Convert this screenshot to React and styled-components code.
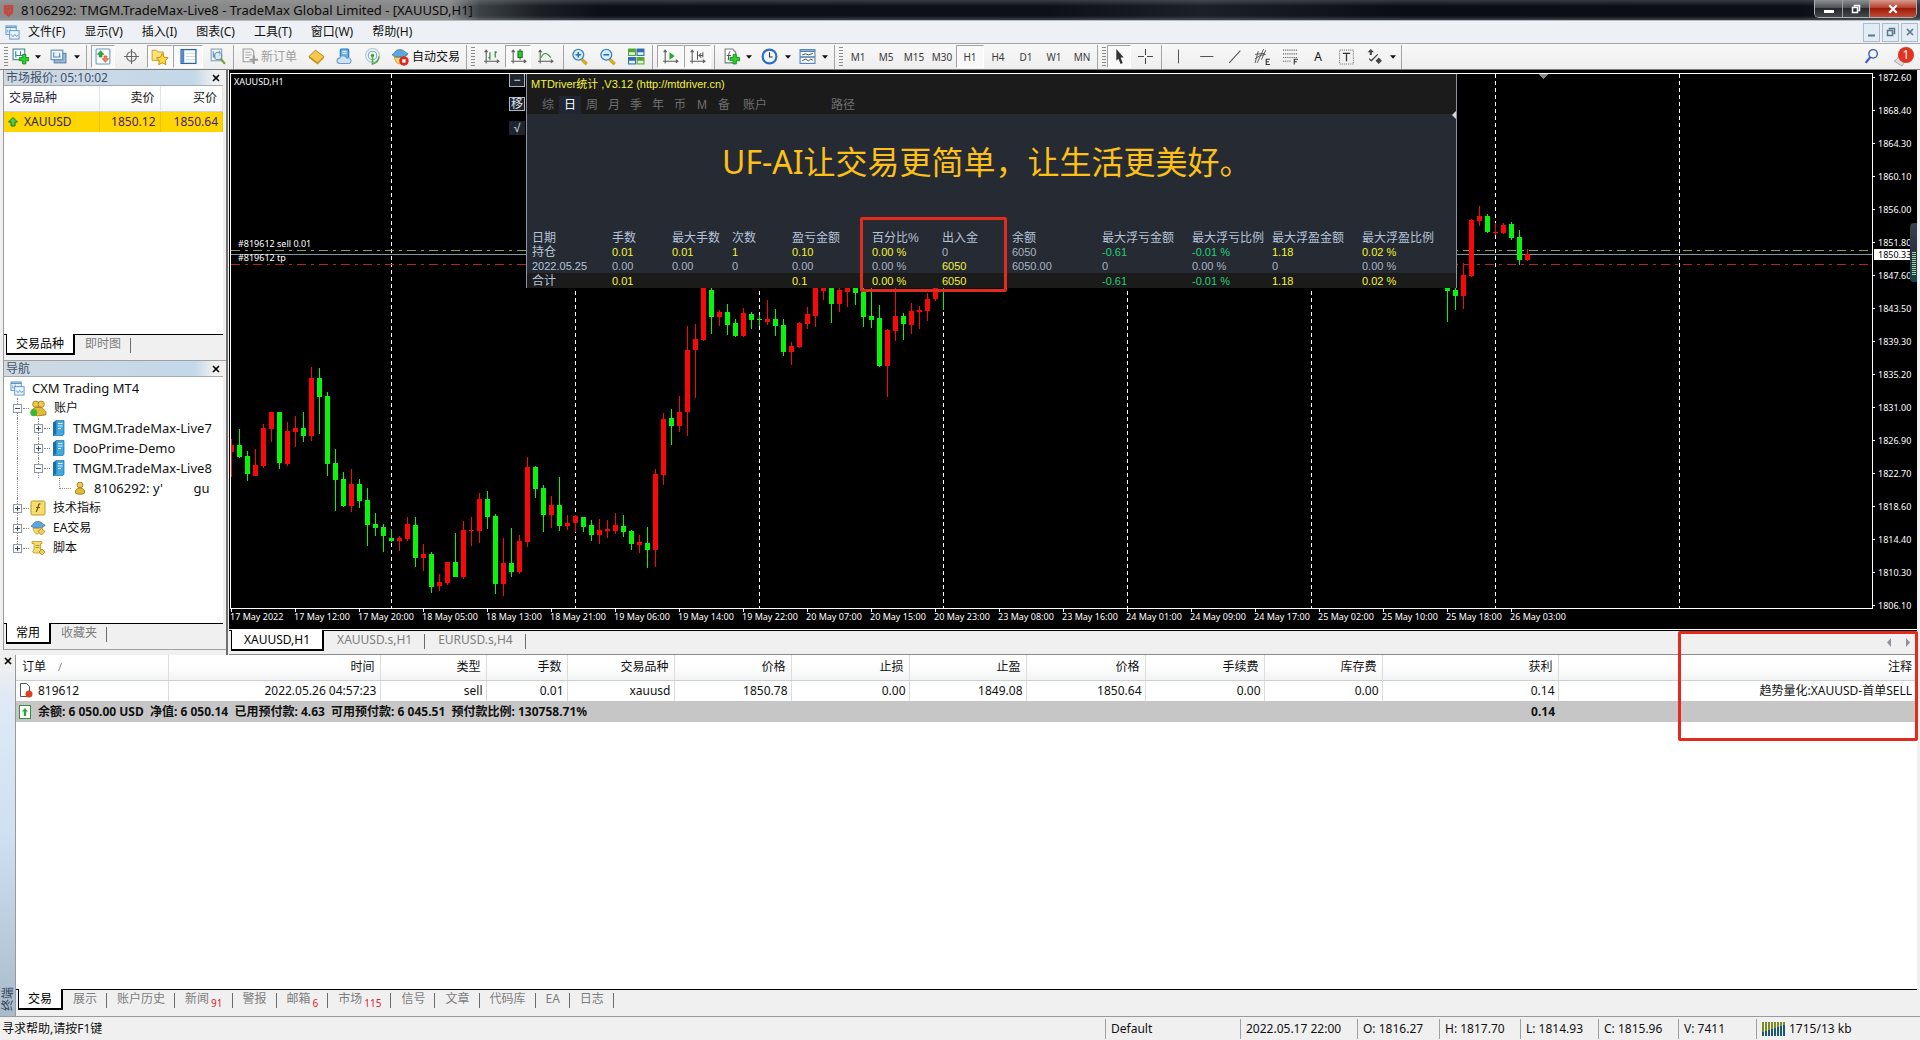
import React from "react";
import styled, { createGlobalStyle, css } from "styled-components";

const UI = `"Noto Sans", "Noto Sans CJK SC", sans-serif`;
const PANEL = `"Liberation Sans", "Noto Sans CJK SC", sans-serif`;

const GlobalStyle = createGlobalStyle`
  *, *::before, *::after { box-sizing: border-box; }
  body { margin: 0; background: #f0f0f0; font: 12px/20px ${UI}; color: #111; }
  button { font: inherit; color: inherit; margin: 0; padding: 0; border: 0; background: none; cursor: default; white-space: nowrap; }
  table { border-collapse: collapse; border-spacing: 0; }
  th { font-weight: 400; }
  svg { display: block; flex: none; }
`;

/* ---------- window frame ---------- */

const Window = styled.div`
  display: flex;
  flex-direction: column;
  min-height: 100vh;
`;

const TitleBar = styled.header`
  display: flex;
  align-items: center;
  height: 21px;
  padding-left: 1px;
  border-bottom: 1px solid #b4b9be;
  background:
    linear-gradient(180deg, rgba(160, 165, 170, 0.3), transparent 30%, transparent 80%, rgba(150, 160, 170, 0.35)),
    linear-gradient(90deg, #8c8c8c 0, #868686 450px, #3c4145 480px, #1b1f24 540px, #0c0f17 600px, #0d1018 1050px, #1c2028 1200px, #0a0d14 1400px, #0b0e14 1800px, #30353b 100%);
`;

const WindowTitle = styled.h1`
  margin: 0 0 0 5px;
  font-size: 13px;
  font-weight: 400;
  line-height: 20px;
  color: #0c0c0c;
`;

const WindowButtons = styled.div`
  display: flex;
  align-self: flex-start;
  margin-left: auto;
  margin-right: 3px;
  height: 18px;
  border: 1px solid #aab0b5;
  border-top: 0;
  border-radius: 0 0 5px 5px;
  overflow: hidden;
`;

const WindowButton = styled.button`
  display: grid;
  place-items: center;
  width: ${(p) => (p.$close ? 47 : 27)}px;
  background: ${(p) =>
    p.$close
      ? "linear-gradient(#d79b8f, #b8402c 45%, #9c1c0c 50%, #c44a30)"
      : "linear-gradient(#8d9094, #4d5055 45%, #24272b 50%, #45484c)"};
  & + & { border-left: 1px solid #9a9fa4; }
`;

const MenuBar = styled.nav`
  display: flex;
  align-items: center;
  height: 22px;
  padding: 0 2px 0 5px;
  background: #edf1f5;
`;

const Menus = styled.div`
  display: flex;
  gap: 19px;
  margin-left: 8px;
`;

const MdiButtons = styled.div`
  display: flex;
  gap: 2px;
  margin-left: auto;
`;

const MdiButton = styled.button`
  display: grid;
  place-items: center;
  width: 17px;
  height: 19px;
  border: 1px solid #a8bccd;
  background: #e2ecf5;
`;

/* ---------- toolbar ---------- */

const Toolbar = styled.div`
  display: flex;
  align-items: center;
  height: 27px;
  border-top: 1px solid #a6a6a6;
  border-bottom: 1px solid #7c7c7c;
  background: linear-gradient(#f8f8f8, #eeeeee);
`;

const Group = styled.div`
  display: flex;
  align-items: center;
  height: 24px;
  padding: 0 ${(p) => p.$end || 2}px 0 ${(p) => p.$start || 2}px;
  border-right: 1px solid #a3a3a3;
`;

const Grip = styled.span`
  width: 4px;
  height: 20px;
  margin-left: 4px;
  background: repeating-linear-gradient(#8c8c8c 0 1px, transparent 1px 3px);
`;

const Tool = styled.button`
  display: flex;
  align-items: center;
  justify-content: center;
  gap: 3px;
  height: 23px;
  width: ${(p) => (p.$wide ? "auto" : `${p.$w || 28}px`)};
  padding: 0 ${(p) => (p.$wide ? 4 : 0)}px;
  color: ${(p) => (p.$off ? "#9d9d9d" : "#111")};
  border: 1px solid transparent;
  ${(p) =>
    p.$on &&
    css`
      border-color: #a2a2a2 #fff #fff #a2a2a2;
      background: #f9f9f9;
      background-clip: padding-box;
    `}
`;

const Period = styled(Tool)`
  font-size: 10px;
  color: #3c3c3c;
`;

const Alerts = styled.div`
  display: flex;
  align-items: center;
  gap: 10px;
  margin-left: auto;
  padding-right: 5px;
`;

/* ---------- docked panels ---------- */

const Workspace = styled.main`
  display: flex;
`;

const Dock = styled.aside`
  display: flex;
  flex-direction: column;
  width: 228px;
  flex: none;
  padding-left: 3px;
  border-right: 2px solid #6f6f6f;
`;

const DockPanel = styled.section`
  display: flex;
  flex-direction: column;
  ${(p) => (p.$grow ? "flex: 1;" : "height: 291px;")}
  padding-right: 3px;
  border-left: 1px solid #999;
  border-bottom: 1px solid #a0a0a0;
  margin-bottom: ${(p) => (p.$grow ? 5 : 0)}px;
`;

const DockTitle = styled.div`
  display: flex;
  align-items: center;
  justify-content: space-between;
  height: 16px;
  padding: 0 1px 0 2px;
  line-height: 16px;
  color: #41536a;
  border-bottom: 1px solid #aaa;
  background: linear-gradient(90deg, #cfd9e2, #c3d8ea 190px, #f0f0f0 210px);
`;

const CloseButton = styled.button`
  display: grid;
  place-items: center;
  width: 12px;
  height: 12px;
`;

const DockBody = styled.div`
  flex: 1;
  background: #fff;
`;

const Quotes = styled.table`
  width: 100%;
  table-layout: fixed;
  th {
    height: 25px;
    padding: 0 5px;
    text-align: right;
    border-right: 1px solid #e3e3e3;
    border-bottom: 1px solid #d0d0d0;
    background: linear-gradient(#fff 45%, #f3f4f5);
  }
  td {
    height: 20px;
    padding: 0 4px;
    text-align: right;
    color: #4a1a80;
    background: #ffd600;
    border-right: 1px solid #eec200;
  }
  th:first-child, td:first-child { text-align: left; color: #2b2440; }
`;

const Symbol = styled.span`
  display: flex;
  align-items: center;
  gap: 6px;
`;

const Tabs = styled.div`
  display: flex;
  height: ${(p) => p.$h || 26}px;
  padding-left: 2px;
  background: linear-gradient(#000, #000) 0 0 / 100% 1px no-repeat #f0f0f0;
`;

const Tab = styled.button`
  position: relative;
  height: ${(p) => (p.$active ? 21 : 20)}px;
  line-height: 20px;
  padding: 0 ${(p) => p.$pad || 10}px;
  color: ${(p) => (p.$active ? "#000" : "#7d7d7d")};
  ${(p) =>
    p.$active &&
    css`
      border: 1px solid #000;
      border-top: 0;
      border-right-width: 2px;
      border-bottom-width: 2px;
      background: #fff;
    `}
  ${(p) =>
    !p.$active &&
    css`
      &::after {
        content: "";
        position: absolute;
        right: 0;
        top: 4px;
        height: 15px;
        border-right: 1px solid #6c6c6c;
      }
    `}
`;

const Count = styled.sub`
  margin-left: 2px;
  font-size: 10px;
  line-height: 1;
  color: #d8242a;
  vertical-align: -4px;
`;

/* ---------- navigator ---------- */

const Tree = styled.ul`
  margin: 0;
  padding: 1px 0 0;
  list-style: none;
`;

const guide = css`
  content: "";
  position: absolute;
  border: 0 dotted #8a8a8a;
  top: 0;
`;

const TreeRow = styled.li`
  position: relative;
  display: flex;
  align-items: center;
  height: 20px;
  padding-left: ${(p) => ({ 0: 6, 1: 9, 2: 30, 3: 69 })[p.$level]}px;
  font-size: ${(p) => (p.$latin ? 13 : 12)}px;
  white-space: pre;
  svg + span { margin-left: 7px; }
  ${(p) => p.$level > 0 && css`&::before { ${guide} left: 13px; height: 100%; border-left-width: 1px; }`}
  ${(p) => p.$level === 2 && css`&::after { ${guide} left: 34px; height: 100%; border-left-width: 1px; }`}
  ${(p) => p.$level === 3 && css`&::after { ${guide} left: 55px; width: 12px; height: 11px; border-width: 0 0 1px 1px; }`}
  &:last-child::before { height: 10px; }
`;

const Expander = styled.button`
  position: relative;
  z-index: 1;
  display: grid;
  place-items: center;
  width: 9px;
  height: 9px;
  margin-right: 8px;
  border: 1px solid #8f9aa5;
  background: #fff;
  &::after {
    content: "";
    position: absolute;
    left: 9px;
    top: 3px;
    width: 6px;
    border-top: 1px dotted #8a8a8a;
  }
`;

/* ---------- chart ---------- */

const ChartColumn = styled.section`
  flex: 1;
  min-width: 0;
  padding: 0 3px 0 1px;
`;

const Chart = styled.div`
  display: grid;
  grid-template-columns: minmax(0, 1fr) 44px;
  padding: 3px 0 0 1px;
  background: #000;
  color: #fff;
  font-size: 9px;
  line-height: 12px;
`;

const Plot = styled.div`
  position: relative;
  height: 536px;
  border: 1px solid #fff;
  overflow: hidden;
`;

const PlotLabel = styled.span`
  position: absolute;
  left: ${(p) => p.$x}px;
  top: ${(p) => p.$y}px;
`;

const PriceAxis = styled.div`
  position: relative;
  height: 536px;
`;

const Price = styled.div`
  display: flex;
  align-items: center;
  gap: 3px;
  height: 33px;
  &:first-child { height: 21px; margin: -6px 0 6px; }
  &::before { content: ""; width: 2px; border-top: 1px solid #fff; }
`;

const LastPrice = styled.output`
  position: absolute;
  left: 1px;
  top: 176px;
  width: 38px;
  height: 11px;
  padding-left: 4px;
  line-height: 11px;
  background: #fff;
  color: #000;
`;

const Meter = styled.div`
  position: absolute;
  right: 0;
  top: 150px;
  width: 7px;
  height: 59px;
  border-radius: 4px 0 0 4px;
  padding: 28px 1px 6px 2px;
  background: linear-gradient(#3b424c, #2a3244 45%, #17474a);
  &::before {
    content: "";
    display: block;
    height: 100%;
    background: repeating-linear-gradient(transparent 0 1px, #a5d6a0 1px 2px);
  }
`;

const TimeAxis = styled.div`
  grid-column: 1 / -1;
  display: flex;
  height: 20px;
  line-height: 16px;
`;

const TimeTick = styled.span`
  position: relative;
  flex: 0 0 64px;
  white-space: nowrap;
  &::before {
    content: "";
    position: absolute;
    left: 1px;
    top: 0;
    height: 3px;
    border-left: 1px solid #fff;
  }
`;

const ChartFooter = styled.div`
  display: flex;
  align-items: flex-start;
  height: 26px;
  padding-top: 1px;
  border-bottom: 1px solid #8c8c8c;
  background: linear-gradient(#fff, #fff) 0 0 / 100% 1px no-repeat;
  > :first-child { flex: 1; }
`;

const Scrollers = styled.div`
  display: flex;
  gap: 13px;
  height: 20px;
  padding: 4px 6px 0;
  border-top: 1px solid #000;
`;

/* ---------- statistics overlay ---------- */

const Statistics = styled.section`
  position: absolute;
  left: 295px;
  top: 0;
  width: 931px;
  height: 214px;
  border: 1px solid #8a94a0;
  border-top: 0;
  background: #252a33;
  font: 12px/14px ${PANEL};
`;

const StatsHead = styled.div`
  height: 40px;
  padding: 2px 4px 0;
  background: #1b1b1b;
`;

const StatsTitle = styled.a`
  display: block;
  font-size: 11px;
  line-height: 16px;
  color: #f4f43a;
  text-decoration: none;
`;

const StatsTabs = styled.div`
  display: flex;
  margin: 4px 0 0 6px;
`;

const StatsTab = styled.button`
  width: ${(p) => p.$w || 22}px;
  height: 18px;
  color: ${(p) => (p.$on ? "#fff" : "#6f6f6f")};
  background: ${(p) => (p.$on ? "#202634" : "none")};
`;

const PanelMarker = styled.svg`
  position: absolute;
  right: 0;
  top: 37px;
`;

const Slogan = styled.p`
  margin: 0;
  height: 117px;
  padding: 28px 0 0 195px;
  font: 32px/40px ${UI};
  color: #fcc016;
`;

const StatsTable = styled.table`
  width: 100%;
  table-layout: fixed;
  text-align: left;
  th, td { padding: 0 0 0 5px; white-space: nowrap; height: 14px; }
  th { color: #b5c3d8; }
  td { color: #aab4c3; font-size: 11px; }
  tr:last-child td { height: 15px; background: #1b1b1b; }
`;

const Cell = styled.td`
  && { color: ${(p) => ({ y: "#f4f43a", g: "#23d07a", w: "#aab4c3" })[p.$tone]}; }
`;

const RowName = styled.td`
  && { font-size: ${(p) => (p.$date ? 11 : 12)}px; color: #b5c3d8; }
`;

const SideButtons = styled.div`
  position: absolute;
  left: 278px;
  top: -1px;
  display: grid;
  gap: 10px;
  font: 12px/13px ${PANEL};
`;

const SideButton = styled.button`
  width: 16px;
  height: 14px;
  color: #dbe4f0;
  background: #20242c;
  border: ${(p) => (p.$flat ? 0 : 1)}px solid #aab6c6;
  line-height: 11px;
`;

const Highlight = styled.div`
  position: absolute;
  border: 3px solid #e22b1d;
  border-radius: 2px;
  pointer-events: none;
`;

const StatsHighlight = styled(Highlight)`
  left: 629px;
  top: 143px;
  width: 147px;
  height: 75px;
`;

const CommentHighlight = styled(Highlight)`
  right: -1px;
  top: -24px;
  width: 240px;
  height: 110px;
`;

/* ---------- terminal ---------- */

const Terminal = styled.section`
  position: relative;
  flex: 1;
  display: flex;
  margin-right: 3px;
`;

const Strip = styled.div`
  display: flex;
  flex-direction: column;
  align-items: center;
  justify-content: space-between;
  width: 15px;
  flex: none;
  padding: 0 0 5px;
  background: linear-gradient(#f0f0f0 10px, #dfeaf5 40px, #cfe0f2 50%, #a9bacb);
`;

const StripName = styled.span`
  writing-mode: vertical-rl;
  text-orientation: sideways;
  transform: rotate(180deg);
  line-height: 14px;
  color: #30445c;
`;

const TerminalBody = styled.div`
  flex: 1;
  min-width: 0;
  display: flex;
  flex-direction: column;
  border-left: 1px solid #999;
  background: #fff;
`;

const Orders = styled.table`
  width: 100%;
  table-layout: fixed;
  text-align: right;
  flex: none;
  th, td { white-space: nowrap; border-right: 1px solid #dcdcdc; }
  th:first-child, td:first-child { text-align: left; }
  th:last-child, td:last-child { border-right: 0; padding-right: 5px; }
  th {
    height: 25px;
    padding: 0 5px 0 6px;
    border-bottom: 1px solid #cfcfcf;
    background: linear-gradient(#fff 40%, #f2f3f4);
  }
  td { height: 21px; padding: 0 3px; }
`;

const BalanceRow = styled.tr`
  font-weight: 700;
  background: #c6c6c6;
  && td { border: 0; }
`;

const OrderCell = styled.span`
  display: flex;
  align-items: center;
  gap: ${(p) => p.$gap || 5}px;
`;

const Spacer = styled.div`
  flex: 1;
`;

const StatusBar = styled.footer`
  display: flex;
  align-items: center;
  height: 24px;
  padding: 0 2px;
  border-top: 1px solid #9a9a9a;
  background: #f0f0f0;
`;

const Help = styled.span`
  flex: 1;
`;

const StatusCell = styled.span`
  display: flex;
  align-items: center;
  gap: 4px;
  width: ${(p) => p.$w}px;
  padding-left: 5px;
  border-left: 1px solid #a0a0a0;
  white-space: nowrap;
`;

/* ---------- icons ---------- */

const Icon = ({ s = 17, children }) => (
  <svg width={s} height={s} viewBox="0 0 16 16" fill="none" aria-hidden="true">{children}</svg>
);

const Plus = ({ x, y }) => (
  <path d={`M${x + 3} ${y}h3v3h3v3h-3v3h-3v-3h-3v-3h3z`} fill="#2ed12e" stroke="#0a8a12" strokeWidth=".8" />
);
const Caret = () => (
  <svg width="6" height="4" viewBox="0 0 7 4" aria-hidden="true"><path d="M0 0h7L3.500 4z" fill="#111" /></svg>
);
const Axes = ({ children }) => (
  <Icon><path d="M3 2v12.500M1 12.500h14M1.500 4L3 2l1.500 2M13 11l2 1.500-2 1.500" stroke="#5b5b5b" />{children}</Icon>
);
const MtIcon = ({ s = 15 }) => (
  <Icon s={s}>
    <rect x="1" y="1" width="11" height="9" fill="#eaf4fb" stroke="#5d97c4" />
    <path d="M1 2.500h11" stroke="#5d97c4" strokeWidth="1.500" />
    <path d="M3 5v3M5.500 4v4" stroke="#5d97c4" />
    <rect x="5" y="6" width="10" height="9" fill="#eaf4fb" stroke="#5d97c4" />
    <path d="M6.500 10l2 2.500 2-2.500 2 2.500 1.500-2" stroke="#5d97c4" />
  </Icon>
);
const NewChartIcon = () => (
  <Icon><rect x="1" y="1" width="11" height="10" fill="#f5fafc" stroke="#3f8297" /><path d="M3.500 3v6M3.500 7h6M8 3v4" stroke="#3f8297" /><Plus x={7} y={6} /></Icon>
);
const ProfilesIcon = () => (
  <Icon><rect x="4" y="5" width="11" height="9" fill="#9fb8d8" stroke="#5d7fa8" /><rect x="1" y="2" width="11" height="9" fill="#e9f3fb" stroke="#5d88b2" /><path d="M3 8.500h7M3.500 4v5M9 5v4" stroke="#5d88b2" /></Icon>
);
const MarketIcon = () => (
  <Icon><rect x="1" y="1" width="13" height="14" rx="1" fill="#fff" stroke="#5e9dbb" /><path d="M4 8.500V6H2.300L5.300 2.500 8.300 6H6.600v2.500z" fill="#2fae36" stroke="#1c7d24" strokeWidth=".6" /><path d="M8.500 7.500V10H6.800l3 3.500 3-3.500h-1.700V7.500z" fill="#f08a5e" stroke="#c83a1c" strokeWidth=".6" /></Icon>
);
const TargetIcon = () => (
  <Icon><circle cx="8" cy="8" r="4.500" stroke="#666" /><path d="M8 1v14M1 8h14" stroke="#666" /></Icon>
);
const FolderStarIcon = () => (
  <Icon s={18}><path d="M1 2h4l1 1.500h5V11H1z" fill="#fbe27a" stroke="#c79a1f" strokeWidth=".8" /><path d="M10 5l1.700 3.200 3.500.5-2.500 2.600.6 3.500-3.300-1.600-3.200 1.600.6-3.500-2.600-2.600 3.600-.5z" fill="#ffd83d" stroke="#bb8512" strokeWidth=".8" /></Icon>
);
const DataIcon = () => (
  <Icon><rect x="1" y="1.500" width="14" height="13" fill="#fff" stroke="#2b64a8" strokeWidth="1.200" /><path d="M1.500 2h2.500v12H1.500z" fill="#4b86c6" /><path d="M5.500 5h8.500M5.500 8h8.500M5.500 11h8.500" stroke="#b5c9de" strokeWidth=".7" /></Icon>
);
const TesterIcon = () => (
  <Icon><rect x="2" y="1" width="10" height="11" fill="#eef5fa" stroke="#7d9fb8" /><path d="M4 3v6M6 5v5M10 2.500v5" stroke="#5d88b2" /><circle cx="8.500" cy="7.500" r="3.500" fill="#cfe5f3aa" stroke="#6c91ac" /><path d="M11 10l4 5" stroke="#6ba539" strokeWidth="2" /></Icon>
);
const OrderIcon = () => (
  <Icon><path d="M2 1h8l2 2v10H2z" fill="#f4f4f4" stroke="#9a9a9a" /><path d="M4 4h5M4 6.500h6M4 9h4" stroke="#aaa" /><path d="M11 7h2v3h3v2h-3v3h-2v-3H8v-2h3z" fill="#9b9b9b" /></Icon>
);
const BookIcon = () => (
  <Icon><path d="M7 2l8 6-6 6-8-6z" fill="#f6c94d" stroke="#a9731a" strokeWidth=".8" /><path d="M1 8v1.500l8 6 6-6V8l-6 6z" fill="#c98a1d" /></Icon>
);
const CommunityIcon = () => (
  <Icon><rect x="4" y="1" width="8" height="8" rx="1" fill="#5fb1e8" stroke="#2775b5" /><path d="M6 3h4M6 5h4" stroke="#fff" /><path d="M3.500 14.500a2.500 2.500 0 010-5 3.500 3.500 0 016.500 0 2.600 2.600 0 012.500 5z" fill="#cfe3f6" stroke="#6e9cc9" /></Icon>
);
const SignalIcon = () => (
  <Icon><circle cx="8" cy="7" r="6.500" stroke="#a8c7d4" /><circle cx="8" cy="7" r="4" stroke="#7aa9b8" /><circle cx="8" cy="7" r="1.600" fill="#3a9e4a" /><path d="M8 8v7c4-1 6-4 6-7" stroke="#56ae57" strokeWidth="1.600" /></Icon>
);
const HatIcon = ({ stop }) => (
  <Icon s={stop ? 18 : 16}>
    <path d="M1 6c3-1 2-4.500 6.500-4.500S12 4 15 5c0 3-11 4.500-14 1z" fill="#5aa8dd" stroke="#2c6fa5" strokeWidth=".7" />
    <path d="M3 8c3 1 7 .5 9.500-.8C12 12 9 14 7 14S3.500 11 3 8z" fill="#f8d673" stroke="#b58a26" strokeWidth=".7" />
    {stop ? <><circle cx="11.500" cy="11.500" r="4.200" fill="#d92b1c" /><rect x="10" y="10" width="3" height="3" fill="#fff" /></> : <path d="M11.500 8.500l3.500 3-3.500 3.500L8 11.500z" fill="#f2cf58" stroke="#a9801a" strokeWidth=".8" />}
  </Icon>
);
const ZoomIcon = ({ plus }) => (
  <Icon s={18}><path d="M9.500 10l4.500 4.500" stroke="#d7a92a" strokeWidth="3" /><circle cx="6.500" cy="6" r="4.800" fill="#d8effb" stroke="#3e86bf" strokeWidth="1.200" /><path d={plus ? "M6.500 3.500v5M4 6h5" : "M4 6h5"} stroke="#2a6da8" strokeWidth="1.400" /></Icon>
);
const TileIcon = () => (
  <Icon>
    {[[0, 0, "#4ea832"], [8, 0, "#2e6cb8"], [0, 8, "#2e6cb8"], [8, 8, "#4ea832"]].map(([x, y, c]) => (
      <g key={`${x}${y}`}><rect x={x} y={y + 0.5} width="7.500" height="7" fill={c} /><path d={`M${x + 1} ${y + 4}h5.500v2.500h-5.500z`} fill="#e8f2e2" /></g>
    ))}
  </Icon>
);
const IndicatorIcon = () => (
  <Icon><path d="M2 1h7l3 3v10H2z" fill="#fff" stroke="#777" /><path d="M7 3.500c-2 0-1.500 3-2 8M3.500 7h4" stroke="#555" /><Plus x={6.5} y={6} /></Icon>
);
const ClockIcon = () => (
  <Icon><circle cx="8" cy="8" r="6.500" fill="#eef6ff" stroke="#2a6cc4" strokeWidth="2" /><path d="M8 4v4.500h3" stroke="#333" /></Icon>
);
const TemplateIcon = () => (
  <Icon><rect x="1" y="1.500" width="14" height="13" fill="#f6fbff" stroke="#4d7fae" /><path d="M1 3h14M1 8.500h14" stroke="#4d7fae" strokeWidth="1.500" /><path d="M3 6.500l3-1 3 1 4-1.500M3 12l3-1.500 3 1.500 2-1.500 2 1" stroke="#444" strokeWidth=".9" /></Icon>
);
const CursorIcon = () => <Icon><path d="M5 1l7 8H9l2 5-2 1-2-5-2 2z" fill="#333" /></Icon>;
const CrossIcon = () => <Icon><path d="M8 1v5.500M8 9.500V15M1 8h5.500M9.500 8H15" stroke="#444" /></Icon>;
const StrokeIcon = ({ d }) => <Icon><path d={d} stroke="#555" /></Icon>;
const ChannelIcon = () => (
  <Icon><path d="M1 14l3-11M3 14l6-13M7 11l4-9M1 10l5-3 5-1M1 6l9-1" stroke="#555" strokeWidth=".9" /><path d="M15 10.500h-3.500v5H15M11.500 13H14" stroke="#333" /></Icon>
);
const FiboIcon = () => (
  <Icon><path d="M1 2h13M1 5.500h13M1 9h13M1 12.500h8" stroke="#555" strokeDasharray="1 1" /><path d="M15 10.500h-3.500v5M11.500 13H14" stroke="#333" /></Icon>
);
const LabelIcon = () => (
  <Icon><rect x="1.500" y="2" width="13" height="13" stroke="#777" strokeDasharray="1 1" /><path d="M4.500 5h7M8 5v7.500" stroke="#333" strokeWidth="1.200" /></Icon>
);
const ArrowsIcon = () => (
  <Icon><path d="M4.500 1l3 3h-2v2.500h-2V4h-2zM12 9l3 3-3 3-3-3z" fill="#444" /><path d="M3 10l2 2 6-6" stroke="#444" strokeWidth="1.200" /></Icon>
);
const SearchIcon = () => <Icon><circle cx="9.500" cy="5.500" r="4" stroke="#3a5fb8" strokeWidth="1.300" /><path d="M7 8.500L2.500 14" stroke="#3a5fb8" strokeWidth="2" /></Icon>;
const CloseX = ({ color = "#000", s = 8, w = 1.7 }) => (
  <svg width={s} height={s} viewBox="0 0 8 8" aria-hidden="true"><path d="M1 1l6 6M7 1L1 7" stroke={color} strokeWidth={w} /></svg>
);
const Restore = ({ color }) => (
  <svg width="10" height="10" viewBox="0 0 10 10" fill="none" aria-hidden="true"><path d="M3.500 2.500v-1h5v5h-1M1.500 3.500h5v5h-5z" stroke={color} strokeWidth="1.500" /></svg>
);
const Minimize = ({ color }) => (
  <svg width="10" height="10" viewBox="0 0 10 10" aria-hidden="true"><path d="M0 6h10v3H0z" fill={color} /></svg>
);
const UpArrow = () => (
  <svg width="10" height="10" viewBox="0 0 10 10" aria-hidden="true"><path d="M5 .5L9.500 5H7v4H3V5H.5z" fill="#4fc94f" stroke="#15781c" /></svg>
);
const PersonIcon = () => (
  <Icon s={14}><circle cx="8" cy="4.500" r="3.300" fill="#eecb4c" stroke="#9c7a17" /><path d="M3 14c-1-4 2-6 5-6s6 2 5 6c-2 1.500-8 1.500-10 0z" fill="#e4b935" stroke="#9c7a17" /></Icon>
);
const PeopleIcon = () => (
  <Icon s={17}>
    <circle cx="5.500" cy="4" r="3" fill="#eecb4c" stroke="#9c7a17" strokeWidth=".8" /><circle cx="10.500" cy="4" r="3" fill="#eecb4c" stroke="#9c7a17" strokeWidth=".8" />
    <path d="M2 13V9l3-2h6l4 4v3l-8 1z" fill="#e4b935" stroke="#9c7a17" strokeWidth=".8" /><circle cx="3.500" cy="12" r="3.200" fill="#35b834" />
  </Icon>
);
const ServerIcon = () => (
  <svg width="15" height="16" viewBox="0 0 15 16" aria-hidden="true"><path d="M2 2.500L5 .5V14l-3 1.500z" fill="#1d6ea8" /><path d="M5 .5h8V14l-1 1.500H2L5 14z" fill="#3fa9e2" stroke="#1d6ea8" strokeWidth=".7" /><path d="M7 3.500h4.500M7 6h4.500M7 8.500h3" stroke="#e8f6ff" /></svg>
);
const FunctionIcon = () => (
  <Icon s={16}><rect x="1" y="1" width="14" height="14" rx="1.500" fill="#f8dc6c" stroke="#b99628" /><path d="M10.500 4c-3-1-1.500 4-4.500 8M6 7.500h4" stroke="#6b520e" strokeWidth="1.200" /></Icon>
);
const ScriptIcon = () => (
  <Icon s={16}><path d="M2 1.500h10v2h-1.500V11H13v2H4l-1.500-1.500L4 10V3.500H2z" fill="#f8dc6c" stroke="#b99628" strokeWidth=".8" /><path d="M5.500 5.500h4M5.500 7.500h4" stroke="#b99628" /><path d="M12 9l3 3-3 3-3-3z" fill="#f2cf58" stroke="#a9801a" strokeWidth=".8" /></Icon>
);
const OrderDocIcon = () => (
  <svg width="14" height="15" viewBox="0 0 14 15" aria-hidden="true"><path d="M1.500.5h6l3 3v10h-9z" fill="#fff" stroke="#555" /><circle cx="10" cy="11" r="3.500" fill="#e0401f" /></svg>
);
const BalanceIcon = () => (
  <svg width="12" height="14" viewBox="0 0 12 14" aria-hidden="true"><rect x=".5" y=".5" width="11" height="13" fill="#fff" stroke="#3d8a45" /><path d="M6 3l3 3.500H7.200V11H4.800V6.500H3z" fill="#2aa637" /></svg>
);
const BellIcon = () => (
  <svg width="22" height="20" viewBox="0 0 22 20" aria-hidden="true">
    <path d="M2 14c4-1 5-7 8-8l6 6c-2 3-4 3-6 7z" fill="#dcdcdc" stroke="#aaa" /><circle cx="14" cy="8" r="8" fill="#de3420" />
    <text x="14" y="12" textAnchor="middle" fontSize="12" fill="#fff" fontFamily="Noto Sans, sans-serif">1</text>
  </svg>
);
const Side = ({ d }) => <svg width="6" height="9" viewBox="0 0 6 9" aria-hidden="true"><path d={d} fill="#8b93a0" /></svg>;

/* ---------- data ---------- */

// Each candle: [colour, high, low, body top, body bottom], one every 8px.
const HISTORY = [
  ["r",365,403,371,378],["g",355,384,371,383],["g",377,407,382,400],["r",375,402,391,402],["r",350,394,354,392],
  ["r",338,368,338,355],["g",338,395,338,389],["r",348,392,357,390],["r",342,373,354,358],["g",338,368,354,362],
  ["r",293,367,304,362],["g",294,360,304,323],["g",318,402,322,390],["g",375,437,389,406],["g",398,433,405,432],
  ["r",395,438,410,432],["g",405,434,410,427],["g",414,472,426,451],["g",439,462,450,454],["g",450,478,453,462],
  ["g",455,468,464,467],["r",462,477,464,467],["r",443,467,450,465],["g",443,493,451,484],["r",470,497,480,484],
  ["g",478,519,480,513],["r",500,517,508,512],["r",488,511,488,509],["g",459,503,488,503],["r",447,505,456,503],
  ["r",443,472,456,457],["r",419,469,425,457],["g",417,455,425,443],["g",440,520,442,510],["r",464,522,489,510],
  ["g",454,503,489,498],["r",461,500,467,498],["r",383,473,393,468],["g",392,424,393,415],["g",411,458,414,441],
  ["r",422,454,431,441],["g",403,457,431,452],["r",441,456,449,452],["r",441,458,442,449],["g",443,458,443,453],
  ["g",446,467,451,461],["r",445,470,456,461],["r",446,464,455,457],["r",439,460,451,457],["g",441,463,452,458],
  ["g",456,476,457,470],["r",461,479,468,471],["g",453,494,469,476],["r",395,493,400,476],["r",339,411,345,401],
  ["g",335,371,344,352],["r",322,358,338,352],["r",252,362,276,338],["r",250,324,265,276],["r",200,267,204,266],
  ["g",205,260,216,243],["r",236,252,238,243],["g",230,261,238,251],["g",245,263,249,262],["r",234,263,239,262],
  ["g",238,255,240,246],["g",241,252,245,246],["r",226,251,245,248],["g",235,262,245,252],["g",245,282,251,278],
  ["r",268,291,272,278],["r",248,274,249,273],["r",233,255,240,250],["r",210,253,210,242],["r",210,226,210,217],
  ["g",210,249,210,230],["r",210,238,216,230],["r",210,233,210,218],["g",210,231,210,219],["g",214,253,218,243],
  ["g",210,254,242,246],["g",231,293,244,292],["r",255,323,256,292],["r",210,267,242,257],["g",239,266,242,250],
  ["r",229,260,237,251],["r",232,255,236,238],["r",219,247,225,237],["r",210,227,210,225],["g",210,236,210,212],
];
const RECENT = [
  ["g",206,248,206,217],["g",206,236,216,222],["r",189,235,201,222],["r",145,203,146,202],["r",132,152,142,147],
  ["g",140,159,142,158],["r",149,161,158,159],["r",149,160,151,159],["g",148,166,150,164],["g",156,191,163,186],["r",175,187,180,186],
];
const RECENT_START = 152;
const DAY_BREAKS = [160, 344, 528, 712, 896, 1080, 1264, 1448];

const PRICES = ["1872.60","1868.40","1864.30","1860.10","1856.00","1851.80","1847.60","1843.50","1839.30","1835.20","1831.00","1826.90","1822.70","1818.60","1814.40","1810.30","1806.10"];
const TIMES = ["17 May 2022","17 May 12:00","17 May 20:00","18 May 05:00","18 May 13:00","18 May 21:00","19 May 06:00","19 May 14:00","19 May 22:00","20 May 07:00","20 May 15:00","20 May 23:00","23 May 08:00","23 May 16:00","24 May 01:00","24 May 09:00","24 May 17:00","25 May 02:00","25 May 10:00","25 May 18:00","26 May 03:00"];

const STAT_COLUMNS = [["日期",80],["手数",60],["最大手数",60],["次数",60],["盈亏金额",80],["百分比%",70],["出入金",70],["余额",90],["最大浮亏金额",90],["最大浮亏比例",80],["最大浮盈金额",90],["最大浮盈比例"]];
const STAT_ROWS = [
  ["持仓","y0.01","y0.01","y1","y0.10","y0.00 %","w0","w6050","g-0.61","g-0.01 %","y1.18","y0.02 %"],
  ["2022.05.25","w0.00","w0.00","w0","w0.00","w0.00 %","y6050","w6050.00","w0","w0.00 %","w0","w0.00 %"],
  ["合计","y0.01","","","y0.1","y0.00 %","y6050","","g-0.61","g-0.01 %","y1.18","y0.02 %"],
];

const ORDER_COLUMNS = [["时间",212],["类型",106],["手数",81],["交易品种",107],["价格",117],["止损",118],["止盈",117],["价格",119],["手续费",119],["库存费",118],["获利",176],["注释"]];
const ORDER = ["2022.05.26 04:57:23","sell","0.01","xauusd","1850.78","0.00","1849.08","1850.64","0.00","0.00","0.14","趋势量化:XAUUSD-首单SELL"];

const TERMINAL_TABS = [["交易"],["展示"],["账户历史"],["新闻","91"],["警报"],["邮箱","6"],["市场","115"],["信号"],["文章"],["代码库"],["EA"],["日志"]];
const STATUS = [["Default",135],["2022.05.17 22:00",117],["O: 1816.27",82],["H: 1817.70",81],["L: 1814.93",78],["C: 1815.96",80],["V: 7411",78]];

const TREE = [
  { level: 0, icon: <MtIcon />, name: "CXM Trading MT4", latin: true },
  { level: 1, icon: <PeopleIcon />, name: "账户", mark: "−" },
  { level: 2, icon: <ServerIcon />, name: "TMGM.TradeMax-Live7", mark: "+", latin: true },
  { level: 2, icon: <ServerIcon />, name: "DooPrime-Demo", mark: "+", latin: true },
  { level: 2, icon: <ServerIcon />, name: "TMGM.TradeMax-Live8", mark: "−", latin: true },
  { level: 3, icon: <PersonIcon />, name: "8106292: y'         gu", latin: true },
  { level: 1, icon: <FunctionIcon />, name: "技术指标", mark: "+" },
  { level: 1, icon: <HatIcon />, name: "EA交易", mark: "+" },
  { level: 1, icon: <ScriptIcon />, name: "脚本", mark: "+" },
];

/* ---------- parts ---------- */

function Candles({ items, start = 0 }) {
  return items.map(([tone, high, low, top, bottom], i) => {
    const x = (start + i) * 8;
    return (
      <g key={i} fill={tone === "r" ? "#f80808" : "#08f408"}>
        <rect x={x} y={high} width="1" height={low - high} />
        <rect x={x - 2} y={top} width="5" height={Math.max(1, bottom - top)} />
      </g>
    );
  });
}

function PriceChart() {
  return (
    <svg width="100%" height="534" shapeRendering="crispEdges" role="img" aria-label="XAUUSD,H1">
      {DAY_BREAKS.map((x) => (
        <line key={x} x1={x + 0.5} x2={x + 0.5} y1="0" y2="534" stroke="#fff" strokeDasharray="4 3" />
      ))}
      <line x1="0" x2="100%" y1="176.500" y2="176.500" stroke="#7e9c6c" strokeDasharray="9 5 3 5" />
      <line x1="0" x2="100%" y1="180.500" y2="180.500" stroke="#8397a3" />
      <line x1="0" x2="100%" y1="190.500" y2="190.500" stroke="#b02626" strokeDasharray="9 5 3 5" />
      <Candles items={HISTORY} />
      <Candles items={RECENT} start={RECENT_START} />
      <path d="M1307 0h10l-5 5z" fill="#8a8a8a" />
    </svg>
  );
}

function StatisticsPanel() {
  return (
    <Statistics>
      <StatsHead>
        <StatsTitle href="#mtdriver">MTDriver统计 ,V3.12 (http://mtdriver.cn)</StatsTitle>
        <StatsTabs>
          {["综", "日", "周", "月", "季", "年", "币", "M", "备"].map((t) => (
            <StatsTab key={t} $on={t === "日"}>{t}</StatsTab>
          ))}
          <StatsTab $w={40}>账户</StatsTab>
          <StatsTab $w={136}>路径</StatsTab>
        </StatsTabs>
      </StatsHead>
      <PanelMarker width="4" height="8" viewBox="0 0 4 8" aria-hidden="true"><path d="M4 0v8L0 4z" fill="#d5d9de" /></PanelMarker>
      <Slogan>UF-AI让交易更简单，让生活更美好。</Slogan>
      <StatsTable>
        <colgroup>{STAT_COLUMNS.map(([n, w]) => <col key={n} width={w} />)}</colgroup>
        <thead><tr>{STAT_COLUMNS.map(([n]) => <th key={n}>{n}</th>)}</tr></thead>
        <tbody>
          {STAT_ROWS.map(([name, ...cells]) => (
            <tr key={name}>
              <RowName $date={name.startsWith("2")}>{name}</RowName>
              {cells.map((c, i) => <Cell key={i} $tone={c[0]}>{c.slice(1)}</Cell>)}
            </tr>
          ))}
        </tbody>
      </StatsTable>
    </Statistics>
  );
}

function MainToolbar() {
  return (
    <Toolbar>
      <Grip />
      <Group $start={1} $end={3}>
        <Tool $w={22} aria-label="New chart"><NewChartIcon /></Tool>
        <Tool $w={14} aria-label="New chart list"><Caret /></Tool>
        <Tool $w={26} aria-label="Profiles"><ProfilesIcon /></Tool>
        <Tool $w={12} aria-label="Profiles list"><Caret /></Tool>
      </Group>
      <Group $start={4} $end={2}>
        <Tool $w={24} $on aria-label="Market watch"><MarketIcon /></Tool>
        <Tool $w={32} aria-label="Crosshair"><TargetIcon /></Tool>
        <Tool $w={26} $on aria-label="Navigator"><FolderStarIcon /></Tool>
        <Tool $w={30} $on aria-label="Terminal"><DataIcon /></Tool>
        <Tool aria-label="Strategy tester"><TesterIcon /></Tool>
      </Group>
      <Group $end={1}>
        <Tool $wide $off><OrderIcon />新订单</Tool>
        <Tool aria-label="MetaEditor"><BookIcon /></Tool>
        <Tool aria-label="Community"><CommunityIcon /></Tool>
        <Tool aria-label="Signals"><SignalIcon /></Tool>
        <Tool $wide><HatIcon stop />自动交易</Tool>
      </Group>
      <Grip />
      <Group $end={4}>
        <Tool aria-label="Bar chart"><Axes><path d="M6.500 4v7M11.500 3v6M6.500 9H5M11.500 4H13" stroke="#2c9440" strokeWidth="1.200" /></Axes></Tool>
        <Tool $w={26} $on aria-label="Candlesticks"><Axes><path d="M9.500 1v10" stroke="#177a22" /><rect x="7.500" y="3" width="4" height="6" fill="#2fc43c" stroke="#177a22" /></Axes></Tool>
        <Tool aria-label="Line chart"><Axes><path d="M4 9c2-5 5-5 9 0" stroke="#2c9440" /></Axes></Tool>
      </Group>
      <Group>
        <Tool aria-label="Zoom in"><ZoomIcon plus /></Tool>
        <Tool aria-label="Zoom out"><ZoomIcon /></Tool>
        <Tool aria-label="Tile windows"><TileIcon /></Tool>
      </Group>
      <Group $start={4} $end={3}>
        <Tool $w={27} $on aria-label="Auto scroll"><Axes><path d="M7 4l5 3.500L7 11z" fill="#27a536" /></Axes></Tool>
        <Tool $w={27} $on aria-label="Chart shift"><Axes><path d="M8 3v8M13 4v5M13 7H9.500l2-2M9.500 7l2 2" stroke="#555" /></Axes></Tool>
      </Group>
      <Group $start={4} $end={5}>
        <Tool $w={24} aria-label="Indicators"><IndicatorIcon /></Tool>
        <Tool $w={12} aria-label="Indicator list"><Caret /></Tool>
        <Tool $w={28} aria-label="Periods"><ClockIcon /></Tool>
        <Tool $w={10} aria-label="Period list"><Caret /></Tool>
        <Tool $w={28} aria-label="Templates"><TemplateIcon /></Tool>
        <Tool $w={8} aria-label="Template list"><Caret /></Tool>
      </Group>
      <Grip />
      <Group $start={1} $end={1}>
        {["M1", "M5", "M15", "M30", "H1", "H4", "D1", "W1", "MN"].map((p) => (
          <Period key={p} $on={p === "H1"}>{p}</Period>
        ))}
      </Group>
      <Grip />
      <Group $start={1} $end={2}>
        <Tool $w={24} $on aria-label="Cursor"><CursorIcon /></Tool>
        <Tool aria-label="Cross"><CrossIcon /></Tool>
      </Group>
      <Group $end={3}>
        <Tool aria-label="Vertical line"><StrokeIcon d="M8 1.500v13" /></Tool>
        <Tool aria-label="Horizontal line"><StrokeIcon d="M2 8h12.500" /></Tool>
        <Tool aria-label="Trend line"><StrokeIcon d="M3 14L13.500 2.500" /></Tool>
        <Tool aria-label="Channel"><ChannelIcon /></Tool>
        <Tool aria-label="Fibonacci"><FiboIcon /></Tool>
        <Tool aria-label="Text">A</Tool>
        <Tool aria-label="Text label"><LabelIcon /></Tool>
        <Tool aria-label="Arrows"><ArrowsIcon /></Tool>
        <Tool $w={10} aria-label="Arrow list"><Caret /></Tool>
      </Group>
      <Alerts>
        <Tool $w={20} aria-label="Search"><SearchIcon /></Tool>
        <Tool $w={24} aria-label="Notifications"><BellIcon /></Tool>
      </Alerts>
    </Toolbar>
  );
}

function MarketWatch() {
  return (
    <DockPanel>
      <DockTitle>市场报价: 05:10:02<CloseButton aria-label="Close"><CloseX /></CloseButton></DockTitle>
      <DockBody>
        <Quotes>
          <colgroup><col width="95" /><col width="61" /><col /></colgroup>
          <thead><tr><th>交易品种</th><th>卖价</th><th>买价</th></tr></thead>
          <tbody><tr><td><Symbol><UpArrow />XAUUSD</Symbol></td><td>1850.12</td><td>1850.64</td></tr></tbody>
        </Quotes>
      </DockBody>
      <Tabs><Tab $active $pad={9}>交易品种</Tab><Tab>即时图</Tab></Tabs>
    </DockPanel>
  );
}

function Navigator() {
  return (
    <DockPanel $grow>
      <DockTitle>导航<CloseButton aria-label="Close"><CloseX /></CloseButton></DockTitle>
      <DockBody>
        <Tree>
          {TREE.map(({ level, icon, name, mark, latin }) => (
            <TreeRow key={name} $level={level} $latin={latin}>
              {mark && (
                <Expander aria-label={mark === "+" ? "Expand" : "Collapse"}>
                  <svg width="7" height="7" viewBox="0 0 7 7"><path d={mark === "+" ? "M1 3.500h5M3.500 1v5" : "M1 3.500h5"} stroke="#35506e" /></svg>
                </Expander>
              )}
              {icon}
              <span>{name}</span>
            </TreeRow>
          ))}
        </Tree>
      </DockBody>
      <Tabs><Tab $active $pad={9}>常用</Tab><Tab>收藏夹</Tab></Tabs>
    </DockPanel>
  );
}

export default function App() {
  return (
    <Window>
      <GlobalStyle />
      <TitleBar>
        <Icon s={15}><path d="M3 2h10v9l-5 4-5-4z" fill="#c9453f" /><path d="M5 5h6M5 8h6M8 8v4" stroke="#8f6a66" /></Icon>
        <WindowTitle>8106292: TMGM.TradeMax-Live8 - TradeMax Global Limited - [XAUUSD,H1]</WindowTitle>
        <WindowButtons>
          <WindowButton aria-label="Minimize"><Minimize color="#fff" /></WindowButton>
          <WindowButton aria-label="Restore"><Restore color="#fff" /></WindowButton>
          <WindowButton $close aria-label="Close"><CloseX color="#fff" s={10} /></WindowButton>
        </WindowButtons>
      </TitleBar>
      <MenuBar>
        <MtIcon />
        <Menus>
          {["文件(F)", "显示(V)", "插入(I)", "图表(C)", "工具(T)", "窗口(W)", "帮助(H)"].map((m) => <button key={m}>{m}</button>)}
        </Menus>
        <MdiButtons>
          <MdiButton aria-label="Minimize chart"><svg width="7" height="9" viewBox="0 0 7 9"><path d="M0 7.500h7" stroke="#5d7688" strokeWidth="2" /></svg></MdiButton>
          <MdiButton aria-label="Restore chart"><Restore color="#5d7688" /></MdiButton>
          <MdiButton aria-label="Close chart"><CloseX color="#5d7688" /></MdiButton>
        </MdiButtons>
      </MenuBar>
      <MainToolbar />

      <Workspace>
        <Dock>
          <MarketWatch />
          <Navigator />
        </Dock>
        <ChartColumn>
          <Chart>
            <Plot>
              <PriceChart />
              <PlotLabel $x={3} $y={2}>XAUUSD,H1</PlotLabel>
              <PlotLabel $x={7} $y={164}>#819612 sell 0.01</PlotLabel>
              <PlotLabel $x={7} $y={178}>#819612 tp</PlotLabel>
              <SideButtons>
                <SideButton>−</SideButton>
                <SideButton>移</SideButton>
                <SideButton $flat>√</SideButton>
              </SideButtons>
              <StatisticsPanel />
              <StatsHighlight />
            </Plot>
            <PriceAxis>
              {PRICES.map((p) => <Price key={p}>{p}</Price>)}
              <LastPrice>1850.33</LastPrice>
              <Meter />
            </PriceAxis>
            <TimeAxis>{TIMES.map((t) => <TimeTick key={t}>{t}</TimeTick>)}</TimeAxis>
          </Chart>
          <ChartFooter>
            <Tabs $h={20}><Tab $active $pad={12}>XAUUSD,H1</Tab><Tab $pad={13}>XAUUSD.s,H1</Tab><Tab $pad={13}>EURUSD.s,H4</Tab></Tabs>
            <Scrollers>
              <button aria-label="Previous"><Side d="M5 0v9L1 4.500z" /></button>
              <button aria-label="Next"><Side d="M1 0v9l4-4.500z" /></button>
            </Scrollers>
          </ChartFooter>
        </ChartColumn>
      </Workspace>

      <Terminal>
        <Strip>
          <CloseButton aria-label="Close terminal"><CloseX /></CloseButton>
          <StripName>终端</StripName>
        </Strip>
        <TerminalBody>
          <Orders>
            <colgroup><col width="152" />{ORDER_COLUMNS.map(([n, w], i) => <col key={i} width={w} />)}</colgroup>
            <thead>
              <tr>
                <th><OrderCell $gap={12}>订单<svg width="4" height="8" viewBox="0 0 4 8"><path d="M.5 8L3.500 0" stroke="#888" /></svg></OrderCell></th>
                {ORDER_COLUMNS.map(([n], i) => <th key={i}>{n}</th>)}
              </tr>
            </thead>
            <tbody>
              <tr>
                <td><OrderCell><OrderDocIcon />819612</OrderCell></td>
                {ORDER.map((c, i) => <td key={i}>{c}</td>)}
              </tr>
              <BalanceRow>
                <td colSpan={11}><OrderCell $gap={7}><BalanceIcon />余额: 6 050.00 USD&nbsp; 净值: 6 050.14&nbsp; 已用预付款: 4.63&nbsp; 可用预付款: 6 045.51&nbsp; 预付款比例: 130758.71%</OrderCell></td>
                <td>0.14</td>
                <td />
              </BalanceRow>
            </tbody>
          </Orders>
          <Spacer />
          <Tabs $h={27}>
            {TERMINAL_TABS.map(([name, count], i) => (
              <Tab key={name} $active={i === 0} $pad={i === 0 ? 9 : 10}>{name}{count && <Count>{count}</Count>}</Tab>
            ))}
          </Tabs>
        </TerminalBody>
        <CommentHighlight />
      </Terminal>

      <StatusBar>
        <Help>寻求帮助,请按F1键</Help>
        {STATUS.map(([text, w]) => <StatusCell key={text} $w={w}>{text}</StatusCell>)}
        <StatusCell $w={162}>
          <svg width="23" height="14" viewBox="0 0 23 14" aria-hidden="true">
            {[0, 1, 2, 3, 4, 5, 6, 7].map((i) => (
              <g key={i}><path d={`M${i * 3} 0h2v14h-2z`} fill="#1d5573" /><path d={`M${i * 3} 0h2v${10 - i}h-2z`} fill="#7d8a2c" /></g>
            ))}
          </svg>
          1715/13 kb
        </StatusCell>
      </StatusBar>
    </Window>
  );
}
